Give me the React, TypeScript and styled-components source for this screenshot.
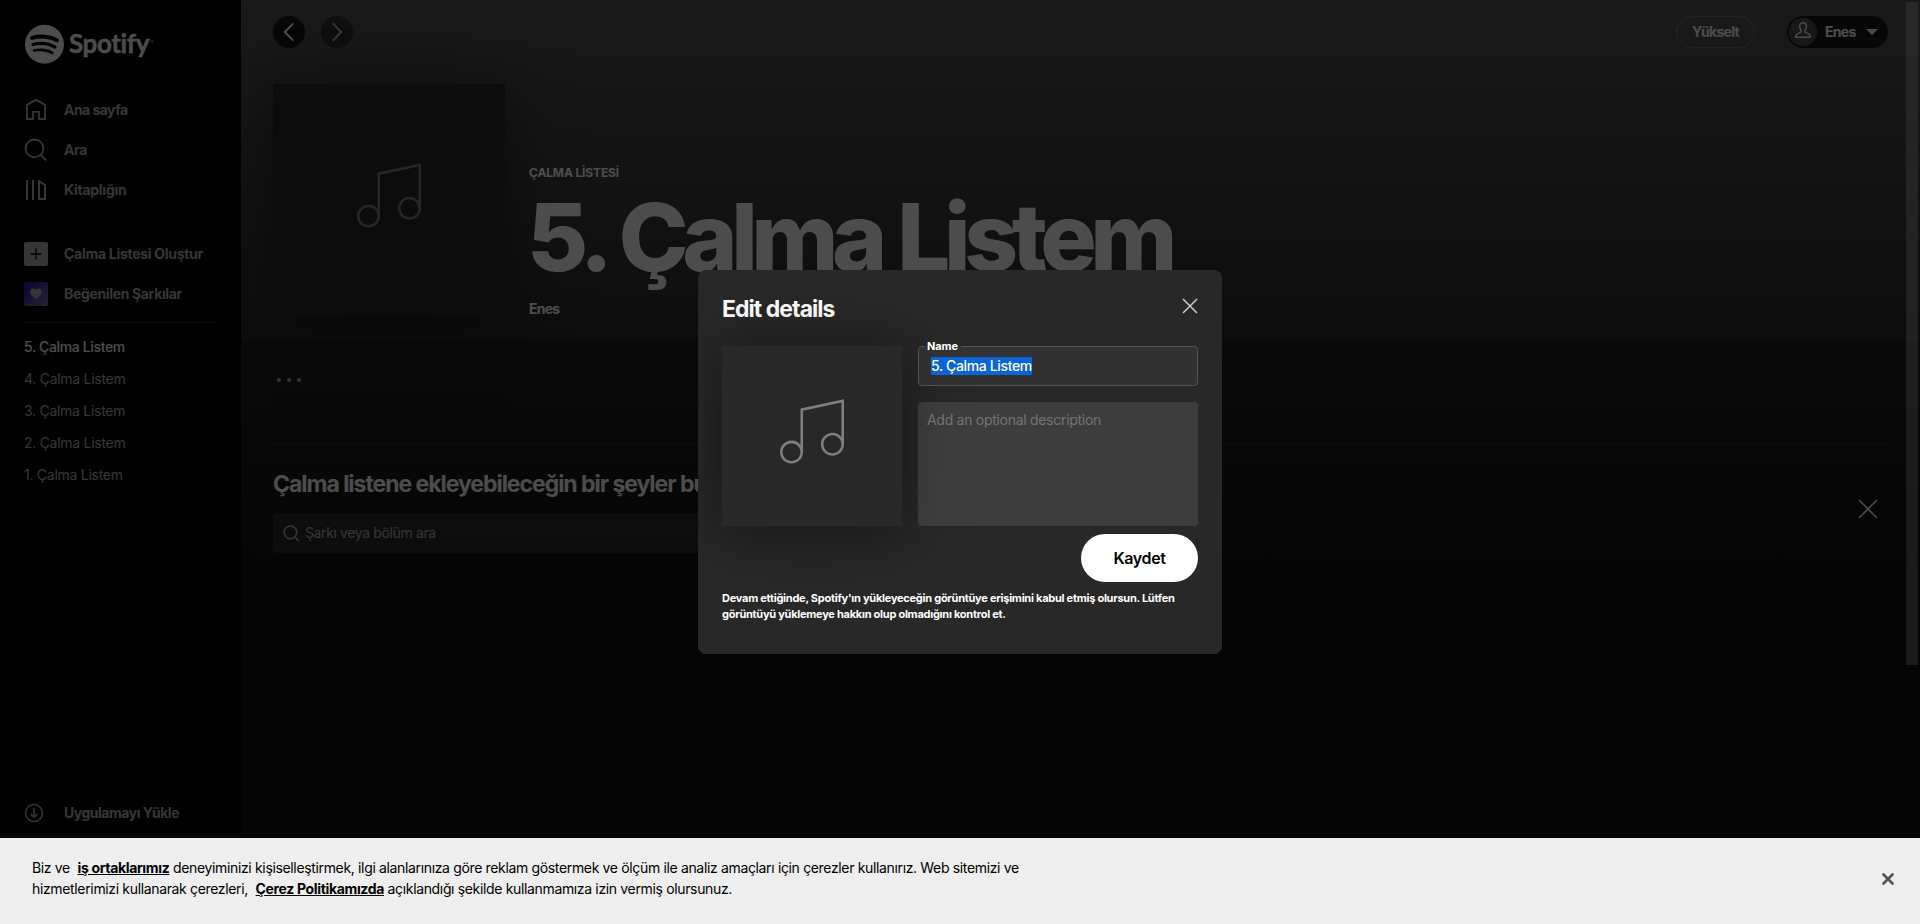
import React from "react";
import styled, { createGlobalStyle } from "styled-components";

const GlobalStyle = createGlobalStyle`
  *, *::before, *::after { box-sizing: border-box; }
  body {
    margin: 0;
    background: #000;
    color: #fff;
    font: 400 14px/16px Inter, "Liberation Sans", sans-serif;
    letter-spacing: -0.32px;
    overflow: hidden;
  }
  button { font: inherit; letter-spacing: inherit; color: inherit; border: 0; padding: 0; background: none; }
  svg { display: block; flex: none; }
  h1, h2, h3, p, ul { margin: 0; padding: 0; font-weight: inherit; }
`;

/* ---------- page frame ---------- */

const Page = styled.div`
  position: relative;
  display: flex;
  flex-direction: column;
  height: 924px;
  overflow: hidden;
`;

const Columns = styled.div`
  display: flex;
  flex: 0 0 833px;
`;

const PlayerBar = styled.footer`
  flex: 1;
  background: #181818;
`;

/* ---------- sidebar ---------- */

const Sidebar = styled.nav`
  display: flex;
  flex-direction: column;
  flex: 0 0 241px;
  padding: 24px 24px 0;
  background: #000;
  color: #b3b3b3;
`;

const LogoLink = styled.a`
  display: block;
  height: 66px;
`;

const NavGroup = styled.ul`
  list-style: none;
  margin-bottom: 24px;
`;

const NavItem = styled.li<{ $track: number }>`
  display: flex;
  align-items: center;
  gap: 16px;
  height: 40px;
  font-weight: 700;
  white-space: nowrap;
  letter-spacing: ${(p) => p.$track}px;
`;

const Tile = styled.span<{ $liked?: boolean }>`
  display: grid;
  place-items: center;
  width: 24px;
  height: 24px;
  border-radius: 2px;
  color: ${(p) => (p.$liked ? "#fff" : "#000")};
  background: ${(p) => (p.$liked ? "linear-gradient(135deg, #450af5, #8e8ee5 75%, #c4efd9 130%)" : "#fff")};
  opacity: 0.7;
`;

const SidebarRule = styled.hr`
  width: 193px;
  height: 1px;
  margin: -16px 0 8px;
  border: 0;
  background: #282828;
`;

const PlaylistItem = styled.li<{ $active?: boolean; $track: number }>`
  line-height: 32px;
  color: ${(p) => (p.$active ? "#fff" : "#b3b3b3")};
  font-weight: ${(p) => (p.$active ? 500 : 400)};
  letter-spacing: ${(p) => p.$track}px;
`;

const InstallLink = styled.a`
  display: flex;
  align-items: center;
  gap: 20px;
  height: 40px;
  margin-top: auto;
  font-weight: 700;
  letter-spacing: -0.485px;
`;

/* ---------- main view ---------- */

const Main = styled.main`
  position: relative;
  flex: 1;
  background: #121212;
`;

const Hero = styled.section`
  height: 340px;
  padding: 0 32px;
  background: linear-gradient(transparent, rgba(0, 0, 0, 0.5)), #575757;
`;

const TopBar = styled.header`
  display: flex;
  align-items: center;
  height: 52px;
  padding-top: 12px;
  margin-bottom: 32px;
`;

const HistoryButton = styled.button<{ $disabled?: boolean }>`
  display: grid;
  place-items: center;
  width: 32px;
  height: 32px;
  margin-right: 16px;
  border-radius: 50%;
  background: rgba(0, 0, 0, 0.7);
  opacity: ${(p) => (p.$disabled ? 0.6 : 1)};
`;

const UpgradeButton = styled.button`
  width: 79px;
  height: 32px;
  margin-left: auto;
  margin-right: 32px;
  border: 1px solid rgba(255, 255, 255, 0.22);
  border-radius: 16px;
  font-weight: 700;
  letter-spacing: -0.689px;
`;

const UserButton = styled.button`
  display: flex;
  align-items: center;
  width: 101px;
  height: 32px;
  padding-left: 2px;
  border-radius: 16px;
  background: rgba(0, 0, 0, 0.7);
  font-weight: 700;
  letter-spacing: -0.725px;
`;

const Avatar = styled.span`
  display: grid;
  place-items: center;
  width: 28px;
  height: 28px;
  padding-bottom: 4px;
  margin-right: 8px;
  border-radius: 50%;
  background: #535353;
`;

const Caret = styled.span`
  margin-left: 10px;
  border: 6px solid transparent;
  border-top-color: #fff;
  border-bottom-width: 0;
`;

const PlaylistHead = styled.div`
  display: flex;
  align-items: flex-end;
  gap: 24px;
`;

const Cover = styled.div<{ $size: number }>`
  display: grid;
  place-items: center;
  width: ${(p) => p.$size}px;
  height: ${(p) => p.$size}px;
  padding-bottom: 9px;
  background: #282828;
  color: #7f7f7f;
  box-shadow: 0 4px 60px rgba(0, 0, 0, 0.5);
`;

const PlaylistKind = styled.h2`
  margin-bottom: 8px;
  font-size: 12px;
  font-weight: 700;
  letter-spacing: -0.14px;
`;

const PlaylistTitle = styled.h1`
  margin: 0 0 15px -2px;
  font-size: 94px;
  line-height: 96px;
  font-weight: 800;
  letter-spacing: -6.4px;
  word-spacing: 2px;
  white-space: nowrap;
`;

const Owner = styled.div`
  position: relative;
  top: 1px;
  font-weight: 700;
  letter-spacing: -0.75px;
`;

const Body = styled.section`
  height: 232px;
  padding: 0 32px;
  background: linear-gradient(rgba(0, 0, 0, 0.6), #121212), #575757;
`;

const ActionRow = styled.div`
  display: flex;
  gap: 6px;
  height: 104px;
  padding: 38px 4px 0;
`;

const Dot = styled.span`
  width: 4px;
  height: 4px;
  border-radius: 50%;
  background: #b3b3b3;
`;

const FindRow = styled.div`
  display: flex;
  align-items: center;
  justify-content: space-between;
  padding: 20px 10px 0 0;
  border-top: 1px solid rgba(255, 255, 255, 0.1);
`;

const FindTitle = styled.h3`
  margin-bottom: 10px;
  font-size: 23px;
  line-height: 38px;
  font-weight: 700;
  letter-spacing: -1.04px;
`;

const SearchField = styled.div`
  display: flex;
  align-items: center;
  gap: 5px;
  width: 512px;
  height: 40px;
  padding-left: 10px;
  border-radius: 4px;
  background: rgba(255, 255, 255, 0.1);
  color: #b3b3b3;
  letter-spacing: -0.37px;
`;

const ScrollThumb = styled.div`
  position: absolute;
  top: 2px;
  right: 2px;
  width: 12px;
  height: 663px;
  background: rgba(255, 255, 255, 0.3);
`;

/* ---------- dialog ---------- */

const Backdrop = styled.div`
  position: absolute;
  inset: 0;
  display: grid;
  place-items: center;
  background: rgba(0, 0, 0, 0.7);
`;

const Dialog = styled.div`
  width: 524px;
  height: 384px;
  padding: 24px;
  border-radius: 8px;
  background: #282828;
  overflow: hidden;
`;

const DialogHeader = styled.div`
  display: flex;
  justify-content: space-between;
  height: 28px;
  margin-bottom: 24px;
`;

const DialogTitle = styled.h2`
  font-size: 23px;
  line-height: 30px;
  font-weight: 700;
  letter-spacing: -0.96px;
`;

const CloseButton = styled.button`
  height: 24px;
  color: #ccc;
`;

const Form = styled.div`
  display: flex;
  gap: 16px;
`;

const Fields = styled.div`
  position: relative;
  display: flex;
  flex-direction: column;
  flex: 1;
  gap: 16px;
`;

const NameField = styled.div`
  position: relative;
  height: 40px;
  padding: 10px 12px;
  border: 1px solid #535353;
  border-radius: 4px;
  background: rgba(255, 255, 255, 0.05);
`;

const FieldLabel = styled.label`
  position: absolute;
  top: -9px;
  left: 6px;
  padding: 0 3px 0 2px;
  font-size: 11px;
  font-weight: 700;
  letter-spacing: -0.1px;
  background: linear-gradient(#282828 55%, #323232 55%);
`;

const Selection = styled.span`
  display: inline-block;
  height: 18px;
  line-height: 18px;
  font-weight: 500;
  letter-spacing: -0.36px;
  background: #0a65d8;
`;

const DescriptionField = styled.div`
  height: 124px;
  padding: 9px;
  border-radius: 4px;
  background: rgba(255, 255, 255, 0.1);
  color: #747474;
  letter-spacing: -0.29px;
  line-height: 18px;
`;

const SaveButton = styled.button`
  display: block;
  width: 117px;
  height: 48px;
  margin: 8px 0 8px auto;
  border-radius: 24px;
  background: #fff;
  color: #000;
  font-size: 16px;
  font-weight: 600;
  letter-spacing: -0.4px;
`;

const Disclaimer = styled.p`
  font-size: 11px;
  font-weight: 700;
  letter-spacing: -0.26px;
  white-space: nowrap;
`;

/* ---------- cookie banner ---------- */

const CookieBanner = styled.aside`
  position: absolute;
  left: 0;
  right: 0;
  bottom: 0;
  display: flex;
  justify-content: space-between;
  height: 86px;
  padding: 19px 26px 0 32px;
  background: #eee;
  color: #000;
  line-height: 21px;
  letter-spacing: -0.346px;
  white-space: nowrap;
`;

const CookieLink = styled.a`
  margin-left: 4px;
  font-weight: 700;
  text-decoration: underline;
`;

const CookieClose = styled.button`
  align-self: flex-start;
  margin-top: 16px;
`;

/* ---------- icons ---------- */

const SpotifyLogo = () => (
  <svg width="140" height="42" viewBox="0 0 140 42" fill="none">
    <circle cx="20.5" cy="20.3" r="19.5" fill="#fff" />
    <g stroke="#000" strokeLinecap="round">
      <path d="M8 13.9c8-2.3 18-1.5 25 2.4" strokeWidth="4" />
      <path d="M9 20.5c7.3-2 15.6-1.1 21.8 2.5" strokeWidth="3.2" />
      <path d="M10 26.6c6.4-1.4 13-.8 18.4 2.3" strokeWidth="2.6" />
    </g>
    <text
      x="45"
      y="29"
      fill="#fff"
      stroke="#fff"
      strokeWidth=".4"
      fontFamily="Lato, sans-serif"
      fontSize="26"
      fontWeight="700"
      letterSpacing="-0.4"
    >
      Spotify
    </text>
    <circle cx="127.800" cy="17.500" r="1.200" stroke="#fff" strokeWidth=".5" />
  </svg>
);

const HomeIcon = () => (
  <svg width="24" height="24" fill="none" stroke="currentColor" strokeWidth="1.8">
    <path d="M2.900 21.100V6.900L12 1.900l9.100 5v14.200H15v-7.200H9v7.200z" />
  </svg>
);

const SearchIcon = ({ size, stroke }: { size: number; stroke: number }) => (
  <svg width={size} height={size} viewBox="0 0 24 24" fill="none" stroke="currentColor" strokeWidth={stroke}>
    <circle cx="10.500" cy="10.400" r="8.900" />
    <path d="M16.600 16.800l5.600 5.600" />
  </svg>
);

const LibraryIcon = () => (
  <svg width="24" height="24" fill="none" stroke="currentColor" strokeWidth="2">
    <path d="M3 2v20M9 2v20M15 3.400l6 3.500v14.100H15z" />
  </svg>
);

const PlusIcon = () => (
  <svg width="12" height="12" stroke="currentColor" strokeWidth="1.3">
    <path d="M6 .6v10.800M.6 6h10.800" />
  </svg>
);

const HeartIcon = () => (
  <svg width="12" height="12" viewBox="0 0 12 12" fill="currentColor">
    <path d="M6 11.600C4.400 9.900.1 6.900.1 3.600.1 1.800 1.400.6 3.100.6 4.400.6 5.400 1.300 6 2.200 6.600 1.300 7.600.6 8.900.6c1.700 0 3 1.200 3 3 0 3.300-4.300 6.300-5.900 8z" />
  </svg>
);

const InstallIcon = () => (
  <svg width="20" height="20" fill="none" stroke="currentColor" strokeWidth="1.5">
    <circle cx="10" cy="10" r="8.500" />
    <path d="M10 5v9.300M6.600 11l3.400 3.400 3.400-3.400" />
  </svg>
);

const Chevron = ({ flip }: { flip?: boolean }) => (
  <svg width="12" height="20" fill="none" stroke="currentColor" strokeWidth="2">
    <path d={flip ? "M1.800 1.400l8.400 8.600-8.400 8.600" : "M10.200 1.400L1.800 10l8.400 8.600"} />
  </svg>
);

const UserIcon = () => (
  <svg width="16" height="17" viewBox="0 0 16 17" fill="none" stroke="currentColor" strokeWidth="1.400">
    <path d="M.8 15.200v-1.400c0-1.300 1-1.800 3.200-2.700 1.600-.6 2.300-1.100 2.300-2C6.300 8 4.600 7 4.600 4.300 4.600 2 6 .8 8 .8s3.400 1.200 3.400 3.500C11.400 7 9.700 8 9.700 9.100c0 .9.700 1.400 2.300 2 2.200.9 3.200 1.400 3.200 2.700v1.400z" />
  </svg>
);

const NoteIcon = () => (
  <svg width="64" height="65" viewBox="0 0 50 50.800" fill="currentColor">
    <path d="M16 7.494v28.362A8.986 8.986 0 0 0 9 32.500c-4.962 0-9 4.038-9 9s4.038 9 9 9 9-4.038 9-9V9.113l30-6.378v27.031a8.983 8.983 0 0 0-7-3.356c-4.962 0-9 4.038-9 9 0 4.963 4.038 9 9 9s9-4.037 9-9V.266L16 7.494zM9 48.500c-3.859 0-7-3.141-7-7s3.141-7 7-7 7 3.141 7 7-3.141 7-7 7zm32-6.090c-3.859 0-7-3.140-7-7 0-3.859 3.141-7 7-7s7 3.141 7 7c0 3.861-3.141 7-7 7z" />
  </svg>
);

const CrossIcon = ({ size, stroke }: { size: number; stroke: number }) => (
  <svg width={size} height={size} viewBox={`0 0 ${size} ${size}`} stroke="currentColor" strokeWidth={stroke}>
    <path d={`M1 1L${size - 1} ${size - 1}M${size - 1} 1L1 ${size - 1}`} />
  </svg>
);

/* ---------- screen ---------- */

const playlists = [
  { name: "5. Çalma Listem", track: -0.36 },
  { name: "4. Çalma Listem", track: -0.28 },
  { name: "3. Çalma Listem", track: -0.28 },
  { name: "2. Çalma Listem", track: -0.28 },
  { name: "1. Çalma Listem", track: -0.27 },
];

export default function App() {
  return (
    <>
      <GlobalStyle />
      <Page>
        <Columns>
          <Sidebar>
            <LogoLink>
              <SpotifyLogo />
            </LogoLink>
            <NavGroup>
              <NavItem $track={-0.54}><HomeIcon />Ana sayfa</NavItem>
              <NavItem $track={-0.36}><SearchIcon size={24} stroke={1.8} />Ara</NavItem>
              <NavItem $track={-0.26}><LibraryIcon />Kitaplığın</NavItem>
            </NavGroup>
            <NavGroup>
              <NavItem $track={-0.29}><Tile><PlusIcon /></Tile>Çalma Listesi Oluştur</NavItem>
              <NavItem $track={-0.35}><Tile $liked><HeartIcon /></Tile>Beğenilen Şarkılar</NavItem>
            </NavGroup>
            <SidebarRule />
            <NavGroup>
              {playlists.map((p, i) => (
                <PlaylistItem key={p.name} $active={i === 0} $track={p.track}>{p.name}</PlaylistItem>
              ))}
            </NavGroup>
            <InstallLink><InstallIcon />Uygulamayı Yükle</InstallLink>
          </Sidebar>

          <Main>
            <Hero>
              <TopBar>
                <HistoryButton><Chevron /></HistoryButton>
                <HistoryButton $disabled><Chevron flip /></HistoryButton>
                <UpgradeButton>Yükselt</UpgradeButton>
                <UserButton>
                  <Avatar><UserIcon /></Avatar>
                  Enes
                  <Caret />
                </UserButton>
              </TopBar>
              <PlaylistHead>
                <Cover $size={232}><NoteIcon /></Cover>
                <div>
                  <PlaylistKind>ÇALMA LİSTESİ</PlaylistKind>
                  <PlaylistTitle>5. Çalma Listem</PlaylistTitle>
                  <Owner>Enes</Owner>
                </div>
              </PlaylistHead>
            </Hero>
            <Body>
              <ActionRow><Dot /><Dot /><Dot /></ActionRow>
              <FindRow>
                <div>
                  <FindTitle>Çalma listene ekleyebileceğin bir şeyler bulalım</FindTitle>
                  <SearchField>
                    <SearchIcon size={17} stroke={2.2} />
                    Şarkı veya bölüm ara
                  </SearchField>
                </div>
                <CrossIcon size={20} stroke={1.6} />
              </FindRow>
            </Body>
            <ScrollThumb />
          </Main>
        </Columns>
        <PlayerBar />

        <Backdrop>
          <Dialog>
            <DialogHeader>
              <DialogTitle>Edit details</DialogTitle>
              <CloseButton><CrossIcon size={16} stroke={1.5} /></CloseButton>
            </DialogHeader>
            <Form>
              <Cover $size={180}><NoteIcon /></Cover>
              <Fields>
                <NameField>
                  <FieldLabel>Name</FieldLabel>
                  <Selection>5. Çalma Listem</Selection>
                </NameField>
                <DescriptionField>Add an optional description</DescriptionField>
              </Fields>
            </Form>
            <SaveButton>Kaydet</SaveButton>
            <Disclaimer>
              Devam ettiğinde, Spotify'ın yükleyeceğin görüntüye erişimini kabul etmiş olursun. Lütfen
              <br />
              görüntüyü yüklemeye hakkın olup olmadığını kontrol et.
            </Disclaimer>
          </Dialog>
        </Backdrop>

        <CookieBanner>
          <p>
            Biz ve <CookieLink>iş ortaklarımız</CookieLink> deneyiminizi kişiselleştirmek, ilgi alanlarınıza göre
            reklam göstermek ve ölçüm ile analiz amaçları için çerezler kullanırız. Web sitemizi ve
            <br />
            hizmetlerimizi kullanarak çerezleri, <CookieLink>Çerez Politikamızda</CookieLink> açıklandığı şekilde
            kullanmamıza izin vermiş olursunuz.
          </p>
          <CookieClose>
            <svg width="12" height="12" stroke="#555" strokeWidth="2.600" strokeLinecap="round">
              <path d="M1.500 1.500l9 9M10.500 1.500l-9 9" />
            </svg>
          </CookieClose>
        </CookieBanner>
      </Page>
    </>
  );
}
